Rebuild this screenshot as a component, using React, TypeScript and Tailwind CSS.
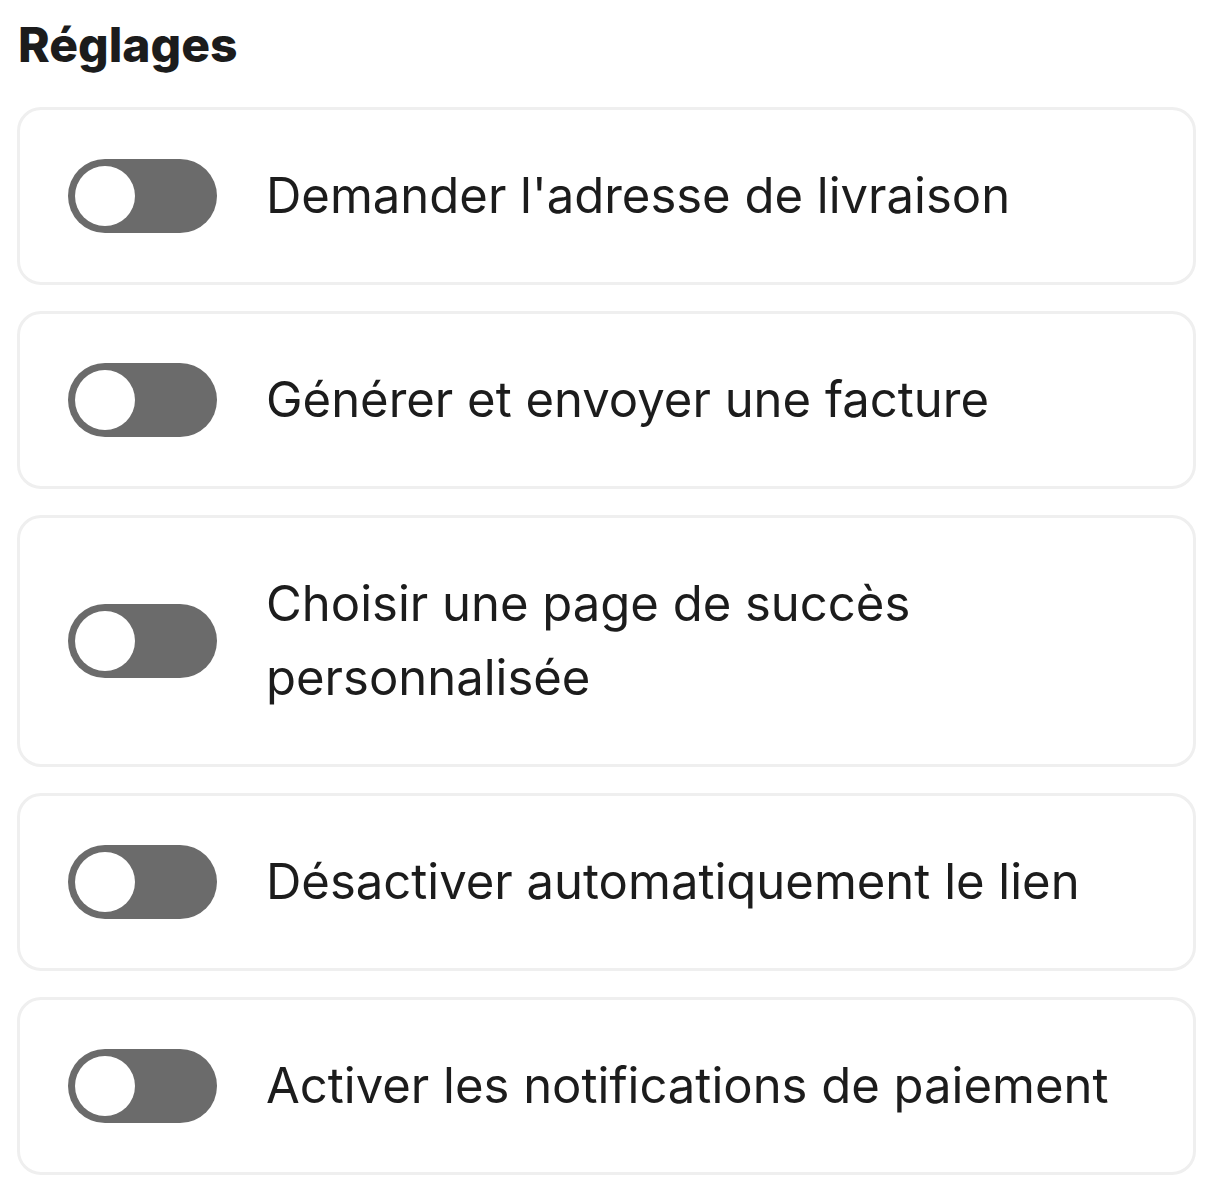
const settings = [
  "Demander l'adresse de livraison",
  'Générer et envoyer une facture',
  'Choisir une page de succès personnalisée',
  'Désactiver automatiquement le lien',
  'Activer les notifications de paiement',
];

function Toggle() {
  return (
    <div className="w-[149px] h-[74px] shrink-0 rounded-full bg-[#6b6b6b] p-[7px] flex items-center">
      <div className="w-[60px] h-[60px] rounded-full bg-white" />
    </div>
  );
}

export default function App() {
  return (
    <div className="min-h-screen bg-white px-[17px] pt-[17px] font-['Inter',sans-serif] text-[#1c1c1c]">
      <h1 className="text-[48px] leading-[56px] font-extrabold mb-[34px] pl-[1px]">Réglages</h1>
      <div className="flex flex-col gap-[26px] w-[1179px]">
        {settings.map((label) => (
          <div
            key={label}
            className="flex items-center gap-[49px] border-[3px] border-[#efefef] rounded-[24px] pl-[48px] pr-[60px] py-[49px]"
          >
            <Toggle />
            <span className="text-[49px] leading-[74px]">{label}</span>
          </div>
        ))}
      </div>
    </div>
  );
}
